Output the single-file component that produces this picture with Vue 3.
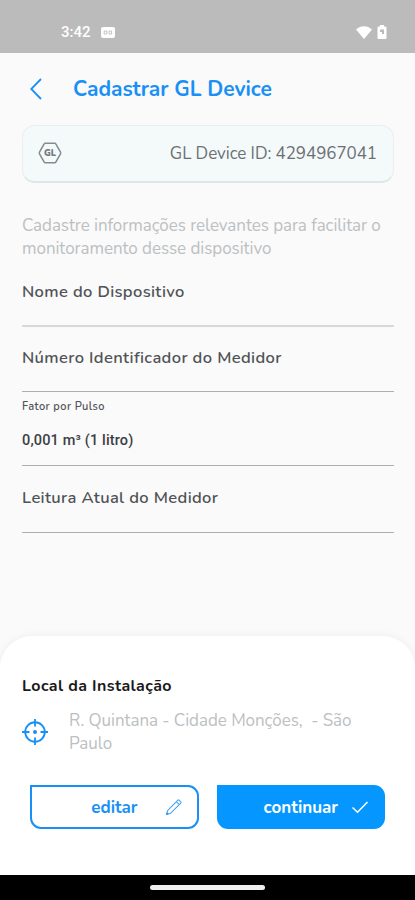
<template>
  <div class="screen">
    <div class="status-bar">
      <span class="clock">3:42</span>
      <svg class="badge-icon" viewBox="0 0 14 11">
        <rect width="14" height="11" rx="2" fill="#fff" />
        <path d="M3.2 4h2.6v3H3.2zM8 4h2.6v3H8z" fill="none" stroke="#c4c4c4" stroke-width="1" />
      </svg>
      <svg class="wifi-icon" viewBox="0 0 16 13">
        <path d="M0 3.6C4.6-1 11.400-1 16 3.600L8 13z" fill="#fff" />
      </svg>
      <svg class="battery-icon" viewBox="0 0 10 14">
        <path d="M3 0h4v1.500h1.500Q9.500 1.500 9.500 2.500V13q0 1-1 1h-7q-1 0-1-1V2.500q0-1 1-1H3z" fill="#fff" />
        <path d="M3 4.500h4v4.500H5V7H3z" fill="#bbb" />
      </svg>
    </div>

    <header class="header">
      <button class="back" aria-label="Voltar">
        <svg viewBox="0 0 12 22">
          <path d="M11 1L1.200 11L11 21" fill="none" stroke="#1890f5" stroke-width="1.800" />
        </svg>
      </button>
      <h1>Cadastrar GL Device</h1>
    </header>

    <main class="content">
      <div class="device-card">
        <svg class="hexagon" viewBox="0 0 24 22">
          <path d="M7.200 1.200h9.600q.7 0 1 .6l4.700 8.400q.4.800 0 1.600l-4.700 8.400q-.3.600-1 .6H7.200q-.7 0-1-.6L1.500 11.800q-.4-.8 0-1.600L6.200 1.800q.3-.6 1-.6z" fill="none" stroke="#858b90" stroke-width="1.500" />
          <text x="12" y="14.200" text-anchor="middle">GL</text>
        </svg>
        <span class="device-id">GL Device ID: {{ deviceId }}</span>
      </div>

      <p class="description">
        Cadastre informações relevantes para facilitar o<br>
        monitoramento desse dispositivo
      </p>

      <div v-for="field in fields" :key="field.name" class="field" :class="field.name">
        <label>{{ field.label }}</label>
        <div v-if="field.value" class="value">{{ field.value }}</div>
      </div>
    </main>

    <section class="sheet">
      <h2>Local da Instalação</h2>
      <div class="location">
        <svg class="target" viewBox="0 0 26 26">
          <circle cx="13" cy="13" r="9.800" fill="none" stroke="#1890f5" stroke-width="1.900" />
          <path d="M13 0v7.500M13 18.500V26M0 13h7.500M18.500 13H26" stroke="#1890f5" stroke-width="1.800" />
          <circle cx="13" cy="13" r="2" fill="#1890f5" />
        </svg>
        <p class="address">R. Quintana - Cidade Monções,&nbsp; - São<br>Paulo</p>
      </div>
      <div class="actions">
        <button class="btn outline">
          <span>editar</span>
          <svg viewBox="0 0 18 18">
            <path d="M1.500 16.500l1.300-4.200L12.900 2.200q.6-.6 1.200 0l1.700 1.700q.6.600 0 1.200L5.700 15.200zM11.400 3.700l2.900 2.900" fill="none" stroke="#4aa3f0" stroke-width="1.100" stroke-linejoin="round" />
            <path d="M1.200 16.800l.7-2.600 1.900 1.900z" fill="#1890f5" />
          </svg>
        </button>
        <button class="btn filled">
          <span>continuar</span>
          <svg viewBox="0 0 18 18">
            <path d="M1.500 9.500l5 4.800L16.500 4" fill="none" stroke="#fff" stroke-width="1.500" />
          </svg>
        </button>
      </div>
    </section>

    <div class="nav-bar">
      <div class="pill"></div>
    </div>
  </div>
</template>

<script setup>
import { ref } from 'vue';

const deviceId = ref('4294967041');

const fields = ref([
  { name: 'nome', label: 'Nome do Dispositivo' },
  { name: 'numero', label: 'Número Identificador do Medidor' },
  { name: 'fator', label: 'Fator por Pulso', value: '0,001 m³ (1 litro)' },
  { name: 'leitura', label: 'Leitura Atual do Medidor' }
]);
</script>

<style>
body {
  margin: 0;
  background: #fafafa;
}
</style>

<style scoped>
* {
  box-sizing: border-box;
}
.screen {
  width: 415px;
  height: 900px;
  display: flex;
  flex-direction: column;
  overflow: hidden;
  background: #fafafa;
  font-family: Nunito, Lato, sans-serif;
}
svg {
  display: block;
  flex: none;
}
h1, h2, p {
  margin: 0;
}
button {
  font-family: inherit;
  border: none;
  background: none;
  padding: 0;
}
.status-bar {
  height: 53px;
  flex: none;
  display: flex;
  align-items: center;
  padding: 11px 28px 0 61px;
  background: #bbb;
}
.clock {
  color: #fff;
  font: 500 15px/20px Roboto, sans-serif;
}
.badge-icon {
  width: 14px;
  height: 11px;
  margin-left: 10px;
}
.wifi-icon {
  width: 16px;
  height: 13px;
  margin-left: auto;
}
.battery-icon {
  width: 10px;
  height: 14px;
  margin-left: 5px;
}
.header {
  height: 72px;
  flex: none;
  display: flex;
  align-items: center;
  padding-left: 30px;
}
.back svg {
  width: 12px;
  height: 22px;
}
.header h1 {
  margin-left: 31px;
  color: #1890f5;
  font-size: 21px;
  font-weight: 700;
  line-height: 28px;
  white-space: nowrap;
}
.content {
  flex: 1;
  padding: 0 21px 0 22px;
}
.device-card {
  height: 58px;
  display: flex;
  align-items: center;
  justify-content: space-between;
  padding: 0 16px 1px 15px;
  border: 1px solid #e8eef1;
  border-bottom: 2px solid #e0e5ea;
  border-radius: 13px;
  background: #f4f9fa;
}
.hexagon {
  width: 24px;
  height: 22px;
}
.hexagon text {
  font-size: 9px;
  font-weight: 900;
  fill: #737a80;
}
.device-id {
  color: #6b7074;
  font-size: 17px;
  letter-spacing: -0.06px;
}
.description {
  margin-top: 31px;
  color: #bcc0c2;
  font-size: 17px;
  line-height: 23px;
  letter-spacing: -0.06px;
  white-space: nowrap;
}
.field {
  color: #505356;
  font-size: 16.500px;
  font-weight: 600;
  line-height: 24px;
  letter-spacing: 0.36px;
  border-bottom: 1px solid #aeaeae;
  white-space: nowrap;
}
.field label {
  display: block;
}
.field.nome {
  height: 67px;
  padding-top: 20px;
  border-bottom: 2px solid #d8d8d8;
}
.field.numero {
  height: 65px;
  padding-top: 19px;
}
.field.fator {
  height: 74px;
  padding-top: 7px;
}
.field.fator label {
  font-size: 11px;
  line-height: 16px;
  letter-spacing: 0.4px;
}
.field.leitura {
  height: 67px;
  padding-top: 20px;
}
.value {
  margin-top: 15px;
  color: #3c4043;
  font: 500 14.500px/22px Roboto, sans-serif;
  letter-spacing: 0.15px;
}
.sheet {
  height: 239px;
  flex: none;
  padding: 38px 30px 0 22px;
  border-radius: 32px 32px 0 0;
  background: #fff;
  box-shadow: 0 0 8px rgba(0, 0, 0, 0.06);
}
.sheet h2 {
  color: #1a1a1a;
  font-size: 16px;
  font-weight: 700;
  line-height: 24px;
  letter-spacing: 0.4px;
}
.location {
  display: flex;
  align-items: center;
  margin-top: 11px;
}
.target {
  width: 26px;
  height: 26px;
}
.address {
  margin-left: 21px;
  color: #bcc0c2;
  font-size: 17px;
  line-height: 23px;
  letter-spacing: -0.05px;
  white-space: nowrap;
}
.actions {
  display: flex;
  gap: 18px;
  margin: 30px 0 0 8px;
}
.btn {
  width: 169px;
  height: 44px;
  display: flex;
  align-items: center;
  justify-content: flex-end;
  padding-right: 14px;
  border: 2px solid #1890f5;
  border-radius: 0 11px 11px 11px;
  color: #1890f5;
  font-size: 17px;
  font-weight: 700;
}
.btn svg {
  width: 18px;
  height: 18px;
}
.outline svg {
  margin-left: 27px;
}
.filled {
  border-color: #0597ff;
  background: #0597ff;
  color: #fff;
}
.filled svg {
  margin-left: 13px;
}
.nav-bar {
  height: 25px;
  flex: none;
  display: flex;
  justify-content: center;
  padding-top: 10px;
  background: #000;
}
.pill {
  width: 115px;
  height: 5px;
  border-radius: 3px;
  background: #eee;
}
</style>
